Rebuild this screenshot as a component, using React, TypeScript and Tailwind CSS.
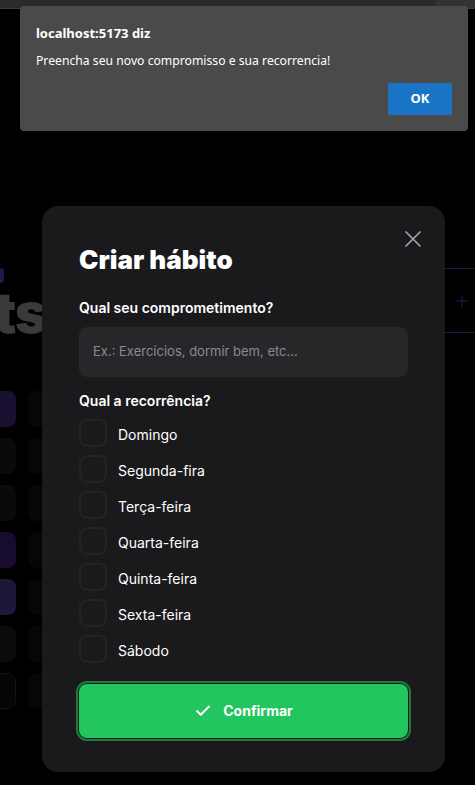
import React from "react";
import { Check, X, Plus } from "lucide-react";

const days = [
  "Domingo",
  "Segunda-fira",
  "Terça-feira",
  "Quarta-feira",
  "Quinta-feira",
  "Sexta-feira",
  "Sábodo",
];

const col1 = [
  "bg-[#190f30]",
  "bg-[#0a0a0b]",
  "bg-[#0a0a0b]",
  "bg-[#170b30]",
  "bg-[#1f1738]",
  "bg-[#0b0b0c]",
  "border border-[#121214] bg-[#050505]",
];

export default function App() {
  return (
    <div
      className="relative h-[785px] w-[475px] overflow-hidden bg-black"
      style={{ fontFamily: "Inter, 'Noto Sans', sans-serif" }}
    >
      {/* browser strip */}
      <div className="flex h-[9px] border-b border-[#3c3c3c] bg-[#333335]">
        <div className="h-full w-[437px] rounded-br-lg bg-[#2a2a2a]" />
      </div>

      {/* dimmed page behind */}
      <div className="flex flex-col">
        <div className="mt-[259px] flex items-start justify-between">
          <div className="flex flex-col">
            <div className="h-[15px] w-[4px] rounded-r-sm bg-[#24174a]" />
            <span className="-ml-[6px] mt-[2px] text-[56px] font-black leading-[56px] tracking-tight text-[#3a3a3c]">
              ts
            </span>
          </div>
          <div className="flex h-[65px] w-[60px] items-center justify-end border-y border-[#211842] pr-[4px]">
            <Plus size={18} strokeWidth={2} className="text-[#1a1433]" />
          </div>
        </div>
        <div className="-ml-[20px] mt-[50px] flex gap-[12px]">
          <div className="flex flex-col gap-[11px]">
            {col1.map((c, i) => (
              <div key={i} className={`h-[36px] w-[36px] rounded-lg ${c}`} />
            ))}
          </div>
          <div className="flex flex-col gap-[11px]">
            {col1.map((_, i) => (
              <div key={i} className="h-[36px] w-[36px] rounded-lg bg-[#060606]" />
            ))}
          </div>
        </div>
      </div>

      {/* modal */}
      <div className="absolute left-[42px] top-[206px] h-[566px] w-[403px] rounded-2xl bg-[#1a1a1c] px-[37px] pt-[38px]">
        <button className="absolute right-[18px] top-[19px] text-[#a1a1aa]">
          <X size={28} strokeWidth={1.5} />
        </button>
        <h1 className="text-[26px] font-black leading-8 text-white">Criar hábito</h1>

        <label className="mt-[22px] block text-sm font-semibold leading-5 text-white">
          Qual seu comprometimento?
        </label>
        <div className="mt-[9px] flex h-[50px] items-center rounded-lg bg-[#27272a] px-[14px] text-[13px] text-[#8a8a92]">
          Ex.: Exercícios, dormir bem, etc...
        </div>

        <label className="mt-[14px] block text-sm font-semibold leading-5 text-white">
          Qual a recorrência?
        </label>
        <div className="mt-2 flex flex-col gap-2">
          {days.map((d) => (
            <div key={d} className="flex items-center gap-[11px]">
              <div className="h-7 w-7 rounded-lg border-2 border-[#242427] bg-[#1a1a1c]" />
              <span className="mt-[3px] text-sm leading-5 text-white">{d}</span>
            </div>
          ))}
        </div>

        <button className="mt-[21px] flex h-[54px] w-full items-center justify-center gap-[11px] rounded-lg bg-[#22c55e] text-sm font-bold text-white ring-2 ring-[#1d7a40] ring-offset-1 ring-offset-[#1a1a1c]">
          <Check size={18} strokeWidth={2.5} />
          Confirmar
        </button>
      </div>

      {/* browser alert */}
      <div
        className="absolute left-[20px] top-[6px] flex h-[125px] w-[448px] flex-col rounded-[4px] bg-[#4a4a4a] px-4 pt-[19px] shadow-lg"
        style={{ fontFamily: "'Noto Sans', 'Open Sans', sans-serif" }}
      >
        <div className="text-[13px] font-bold leading-4 text-white">localhost:5173 diz</div>
        <div className="mt-[12px] text-[12.2px] leading-4 text-white">
          Preencha seu novo compromisso e sua recorrencia!
        </div>
        <div className="mt-[14px] flex justify-end">
          <button className="h-[32px] w-[64px] rounded-[2px] bg-[#1a74c6] text-[13px] font-bold text-white">
            OK
          </button>
        </div>
      </div>
    </div>
  );
}
